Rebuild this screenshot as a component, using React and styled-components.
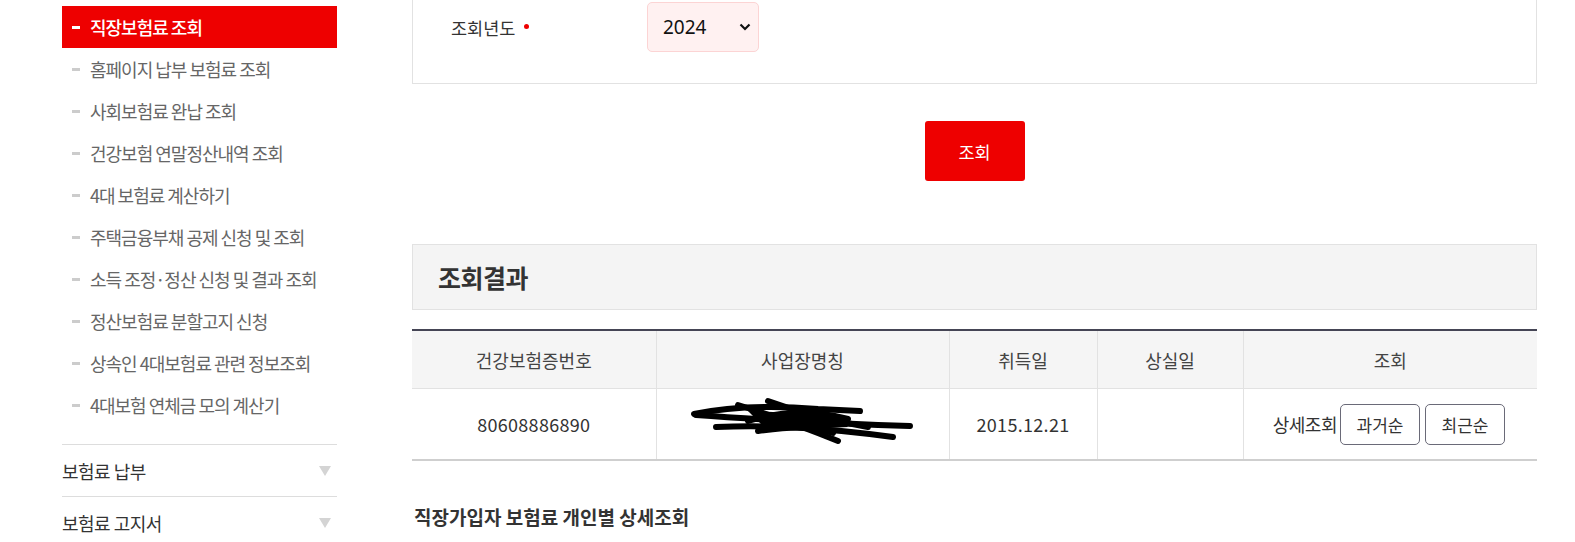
import React from "react";
import styled, { createGlobalStyle } from "styled-components";

const GlobalStyle = createGlobalStyle`
  html, body {
    margin: 0;
    padding: 0;
    background: #fff;
    overflow: hidden;
  }
  body {
    font-family: "Noto Sans CJK KR", "Noto Sans", sans-serif;
    color: #333;
  }
`;

const Page = styled.div`
  display: flex;
  align-items: flex-start;
  padding-left: 62px;
  gap: 75px;
`;

/* Sidebar */
const Side = styled.nav`
  width: 275px;
  flex-shrink: 0;
  padding-top: 6px;
`;

const SubList = styled.ul`
  list-style: none;
  margin: 0;
  padding: 0 0 18px;
`;

const SubItem = styled.li`
  display: flex;
  align-items: center;
  height: 42px;
  padding-left: 10px;
  font-size: 18px;
  letter-spacing: -1px;
  color: ${(p) => (p.$active ? "#fff" : "#666")};
  background: ${(p) => (p.$active ? "#ee0000" : "transparent")};
  font-weight: ${(p) => (p.$active ? 500 : 400)};

  &::before {
    content: "";
    width: 8px;
    height: 3px;
    margin-right: 10px;
    background: ${(p) => (p.$active ? "#fff" : "#ccc")};
  }
`;

const TopItem = styled.div`
  display: flex;
  align-items: center;
  justify-content: space-between;
  height: 51px;
  border-top: 1px solid #ddd;
  font-size: 18px;
  color: #333;
  letter-spacing: -0.5px;
`;

const Tri = styled.span`
  width: 0;
  height: 0;
  margin-right: 6px;
  border-left: 6px solid transparent;
  border-right: 6px solid transparent;
  border-top: 10px solid #d4d4d4;
`;

/* Main */
const Main = styled.main`
  width: 1125px;
  flex-shrink: 0;
  margin-top: -28px;
`;

const FormBox = styled.div`
  border: 1px solid #e2e2e2;
  height: 112px;
  display: flex;
  align-items: flex-start;
  padding: 29px 0 0 38px;
  box-sizing: border-box;
`;

const Label = styled.label`
  width: 196px;
  font-size: 17.5px;
  color: #333;
  padding-top: 13px;
  display: flex;
  align-items: flex-start;
  gap: 9px;

  &::after {
    content: "";
    width: 5px;
    height: 5px;
    border-radius: 50%;
    background: #ee0000;
    margin-top: 9px;
  }
`;

const SelectWrap = styled.div`
  position: relative;
  width: 112px;
  height: 50px;
`;

const Select = styled.select`
  appearance: none;
  width: 100%;
  height: 100%;
  border: 1px solid #fcd4d4;
  border-radius: 5px;
  background: #fff1f1;
  font-family: "Noto Sans", sans-serif;
  font-size: 19px;
  color: #111;
  padding: 0 0 0 15px;
  outline: none;
`;

const Chevron = styled.svg`
  position: absolute;
  right: 8px;
  top: 21px;
  pointer-events: none;
`;

const BtnRow = styled.div`
  display: flex;
  justify-content: center;
  padding: 37px 0 63px;
`;

const SearchBtn = styled.button`
  width: 100px;
  height: 60px;
  border: 0;
  border-radius: 3px;
  background: #ee0000;
  color: #fff;
  font-family: inherit;
  font-size: 17.5px;
`;

const ResultHead = styled.div`
  height: 66px;
  box-sizing: border-box;
  border: 1px solid #e2e2e2;
  background: #f4f4f4;
  display: flex;
  align-items: center;
  padding-left: 25px;
  font-size: 25px;
  font-weight: 700;
  color: #333;
  letter-spacing: -0.5px;
  margin-bottom: 19px;
`;

const Table = styled.table`
  width: 100%;
  border-collapse: collapse;
  table-layout: fixed;
  border-top: 2px solid #454555;
  border-bottom: 2px solid #cfcfcf;
`;

const Th = styled.th`
  height: 55px;
  background: #f5f5f5;
  font-weight: 400;
  font-size: 18px;
  color: #444;
  border-left: 1px solid #e2e2e2;
  border-bottom: 1px solid #e2e2e2;
  &:first-child {
    border-left: 0;
  }
`;

const Td = styled.td`
  height: 68px;
  text-align: center;
  font-size: 18px;
  color: #333;
  letter-spacing: 0.3px;
  border-left: 1px solid #e2e2e2;
  &:first-child {
    border-left: 0;
  }
`;

const Actions = styled.div`
  display: flex;
  align-items: center;
  justify-content: flex-end;
  padding-right: 31px;
  gap: 5px;
  letter-spacing: -0.5px;
`;

const SmallBtn = styled.button`
  width: 80px;
  height: 41px;
  border: 1px solid #6a6a78;
  border-radius: 5px;
  background: #fff;
  font-family: inherit;
  font-size: 17px;
  color: #333;
  padding: 0;
  &:first-of-type {
    margin-left: -2px;
  }
`;

const SubTitle = styled.h3`
  margin: 42px 0 0 2px;
  font-size: 19px;
  font-weight: 700;
  color: #333;
`;

const subMenus = [
  "직장보험료 조회",
  "홈페이지 납부 보험료 조회",
  "사회보험료 완납 조회",
  "건강보험 연말정산내역 조회",
  "4대 보험료 계산하기",
  "주택금융부채 공제 신청 및 조회",
  "소득 조정·정산 신청 및 결과 조회",
  "정산보험료 분할고지 신청",
  "상속인 4대보험료 관련 정보조회",
  "4대보험 연체금 모의 계산기",
];

const Scribble = () => (
  <svg width="230" height="50" viewBox="0 0 230 50">
    <g fill="none" stroke="#000" strokeLinecap="round" strokeWidth="6">
      <path d="M6 17 C40 10 80 8 130 12 L172 14" />
      <path d="M8 18 C60 22 120 25 190 28 L222 29" />
      <path d="M28 30 C80 28 130 30 205 40" />
      <path d="M50 8 C90 20 120 32 150 44" />
      <path d="M80 4 C110 15 150 25 180 30" />
      <path d="M60 24 C100 12 130 14 160 22" />
      <path d="M70 34 C100 30 120 28 145 36" />
    </g>
    <path d="M60 14 L150 18 L160 30 L80 34 Z" fill="#000" />
  </svg>
);

export default function App() {
  return (
    <>
      <GlobalStyle />
      <Page>
        <Side>
          <SubList>
            {subMenus.map((m, i) => (
              <SubItem key={m} $active={i === 0}>
                {m}
              </SubItem>
            ))}
          </SubList>
          <TopItem>
            보험료 납부 <Tri />
          </TopItem>
          <TopItem>
            보험료 고지서 <Tri />
          </TopItem>
        </Side>

        <Main>
          <FormBox>
            <Label>조회년도</Label>
            <SelectWrap>
              <Select defaultValue="2024">
                <option>2024</option>
                <option>2023</option>
              </Select>
              <Chevron width="12" height="8" viewBox="0 0 12 8">
                <path d="M1.5 1.5 L6 6 L10.5 1.5" fill="none" stroke="#111" strokeWidth="2.2" />
              </Chevron>
            </SelectWrap>
          </FormBox>

          <BtnRow>
            <SearchBtn>조회</SearchBtn>
          </BtnRow>

          <ResultHead>조회결과</ResultHead>

          <Table>
            <colgroup>
              <col style={{ width: 244 }} />
              <col style={{ width: 293 }} />
              <col style={{ width: 148 }} />
              <col style={{ width: 146 }} />
              <col style={{ width: 294 }} />
            </colgroup>
            <thead>
              <tr>
                <Th>건강보험증번호</Th>
                <Th>사업장명칭</Th>
                <Th>취득일</Th>
                <Th>상실일</Th>
                <Th>조회</Th>
              </tr>
            </thead>
            <tbody>
              <tr>
                <Td>80608886890</Td>
                <Td>
                  <Scribble />
                </Td>
                <Td>2015.12.21</Td>
                <Td></Td>
                <Td>
                  <Actions>
                    상세조회
                    <SmallBtn>과거순</SmallBtn>
                    <SmallBtn>최근순</SmallBtn>
                  </Actions>
                </Td>
              </tr>
            </tbody>
          </Table>

          <SubTitle>직장가입자 보험료 개인별 상세조회</SubTitle>
        </Main>
      </Page>
    </>
  );
}
